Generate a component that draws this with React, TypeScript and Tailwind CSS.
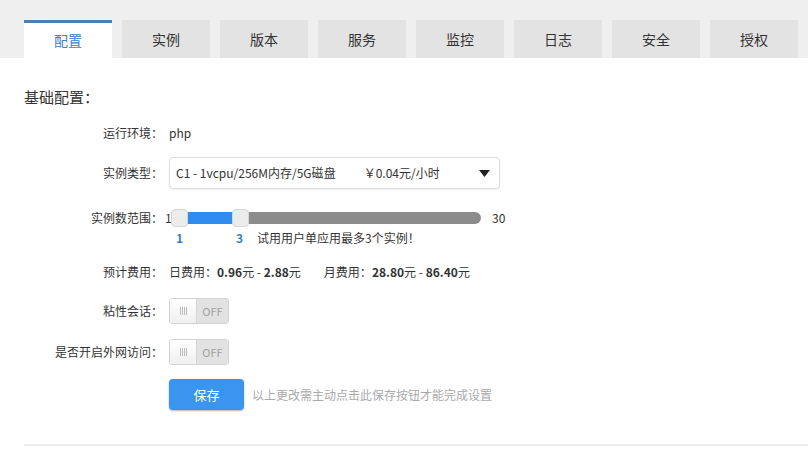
import { useState } from "react";

const tabs = ["配置", "实例", "版本", "服务", "监控", "日志", "安全", "授权"];

const font = { fontFamily: '"Microsoft YaHei", "Noto Sans CJK SC", "Noto Sans", sans-serif' };

function Row({ label, className = "", children }: { label: string; className?: string; children: React.ReactNode }) {
  return (
    <div className={`ml-[24px] flex items-center ${className}`}>
      <div className="w-[139px] shrink-0 text-right text-[12px] text-[#333]">{label}</div>
      <div className="ml-[6px] flex items-center">{children}</div>
    </div>
  );
}

function Toggle() {
  return (
    <div className="flex h-[26px] w-[60px] overflow-hidden rounded-[3px] border border-[#d2d2d2]">
      <div className="flex w-[27px] items-center justify-center gap-[1px] border-r border-[#d6d6d6] bg-gradient-to-b from-white to-[#f0f0f0]">
        <div className="h-[8px] w-[1px] bg-[#bbb]" />
        <div className="h-[8px] w-[1px] bg-[#bbb]" />
        <div className="h-[8px] w-[1px] bg-[#bbb]" />
        <div className="h-[8px] w-[1px] bg-[#bbb]" />
      </div>
      <div className="flex flex-1 items-center justify-center bg-[#e2e2e2] text-[11px] text-[#a0a0a0]">OFF</div>
    </div>
  );
}

export default function App() {
  const [active] = useState(0);

  return (
    <div className="h-[449px] w-[808px] overflow-hidden bg-white" style={font}>
      <div className="flex h-[58px] gap-[10px] bg-[#efefef] pl-[24px] pt-[20px]">
        {tabs.map((t, i) => (
          <div
            key={t}
            className={`flex h-[38px] w-[88px] items-center justify-center text-[14px] ${
              i === active
                ? "border-t-[3px] border-[#4a7fb6] bg-white text-[#3f80cc]"
                : "bg-[#e3e3e3] text-[#333]"
            }`}
          >
            {t}
          </div>
        ))}
      </div>

      <div className="mx-[24px] mt-[29px] flex h-[20px] items-center text-[15px] text-[#333]">基础配置：</div>

      <Row label="运行环境：" className="mt-[14px] h-[24px]">
        <span className="text-[12px] text-[#333]">php</span>
      </Row>

      <Row label="实例类型：" className="mt-[12px] h-[32px]">
        <div className="flex h-[32px] w-[331px] items-center rounded-[4px] border border-[#dcdcdc] pl-[6px] pr-[9px] text-[12px] text-[#333] shadow-[0_1px_2px_rgba(0,0,0,0.06)]">
          <span>C1 - 1vcpu/256M内存/5G磁盘</span>
          <span className="ml-[28px]">￥0.04元/小时</span>
          <svg className="ml-auto" width="11" height="7" viewBox="0 0 11 7">
            <path d="M0 0 L11 0 L5.5 7 Z" fill="#222" />
          </svg>
        </div>
      </Row>

      <Row label="实例数范围：" className="mt-[19px] h-[20px]">
        <div className="relative flex items-center">
          <span className="-ml-[4px] w-[6px] text-[12px] text-[#333]">1</span>
          <div className="relative h-[12px] w-[310px] rounded-r-full bg-[#8c8c8c]">
            <div className="absolute left-[12px] top-0 h-[12px] w-[56px] bg-[#2f8def]" />
            <div className="absolute -top-[3px] left-0 h-[18px] w-[17px] rounded-[4px] border border-[#d6d6d6] bg-[#ececec]" />
            <div className="absolute -top-[3px] left-[61px] h-[18px] w-[17px] rounded-[4px] border border-[#d6d6d6] bg-[#ececec]" />
          </div>
          <span className="ml-[11px] text-[12px] text-[#333]">30</span>
        </div>
      </Row>

      <div className="mt-[3px] flex h-[14px] items-center pl-[176px] text-[12px]">
        <span className="w-[60px] font-bold text-[#3a7fc4]">1</span>
        <span className="font-bold text-[#3a7fc4]">3</span>
        <span className="ml-[14px] text-[#333]">试用用户单应用最多3个实例！</span>
      </div>

      <Row label="预计费用：" className="mt-[17px] h-[20px]">
        <span className="text-[12px] text-[#333]">
          日费用：<b>0.96</b>元 - <b>2.88</b>元
        </span>
        <span className="ml-[23px] text-[12px] text-[#333]">
          月费用：<b>28.80</b>元 - <b>86.40</b>元
        </span>
      </Row>

      <Row label="粘性会话：" className="mt-[16px] h-[26px]">
        <Toggle />
      </Row>

      <Row label="是否开启外网访问：" className="mt-[15px] h-[26px]">
        <Toggle />
      </Row>

      <Row label="" className="mt-[14px] h-[31px]">
        <button className="h-[31px] w-[75px] rounded-[4px] bg-[#3a95f0] text-[13px] text-white shadow-[0_1px_2px_rgba(0,0,0,0.3)]">
          保存
        </button>
        <span className="ml-[8px] text-[12px] text-[#aaa]">以上更改需主动点击此保存按钮才能完成设置</span>
      </Row>

      <div className="ml-[24px] mt-[34px] h-[2px] border-t border-b border-[#ececec]" />
    </div>
  );
}
